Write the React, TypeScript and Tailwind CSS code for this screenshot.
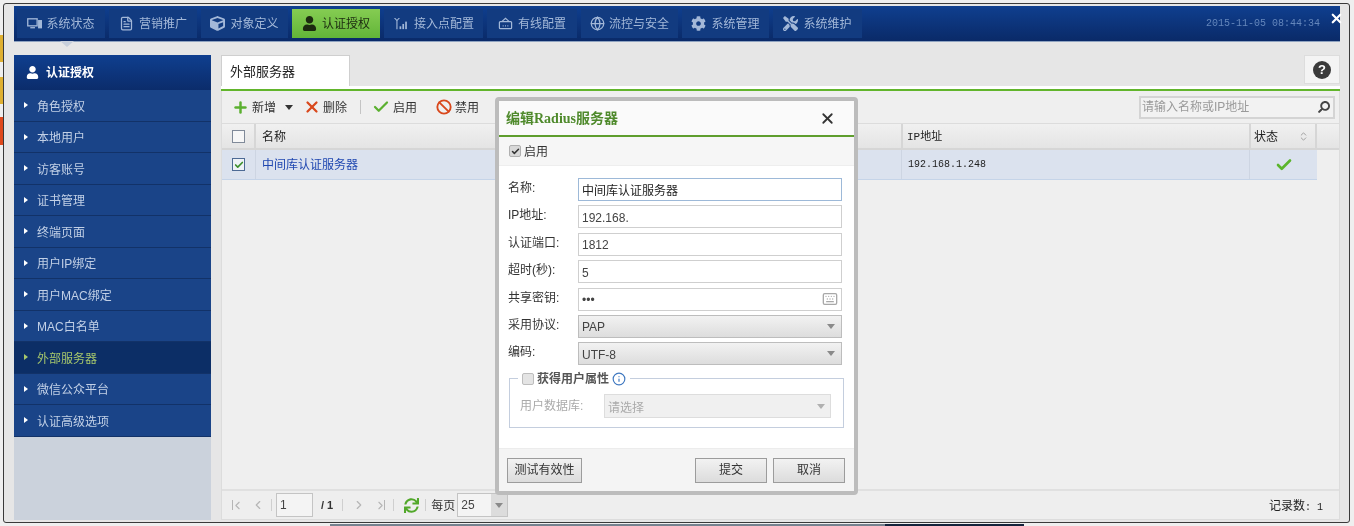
import React from "react";
import { FileText, Globe, X, Check, Ban, ChevronLeft, ChevronRight, ChevronsUpDown, Info, Keyboard, Plus } from "lucide-react";
import { FaCube, FaUser, FaCog, FaTools, FaSync, FaSearch } from "react-icons/fa";

type IconT = React.ComponentType<{ size?: number; className?: string }>;

const MonitorTower: IconT = ({ size = 16 }) => (
  <svg width={size} height={size} viewBox="0 0 16 16" fill="none" stroke="currentColor" strokeWidth="1.4">
    <rect x="0.8" y="3" width="10" height="7.5" />
    <path d="M3.5 12.5h5" />
    <rect x="12.5" y="5" width="2.8" height="7.5" fill="currentColor" />
  </svg>
);
const Antenna: IconT = ({ size = 16 }) => (
  <svg width={size} height={size} viewBox="0 0 16 16" fill="currentColor">
    <path d="M1 2l2.6 3V14h1.2V5L7.4 2H6L4.2 4 2.4 2z" />
    <rect x="7" y="11" width="1.8" height="3" />
    <rect x="10" y="8.5" width="1.8" height="5.5" />
    <rect x="13" y="6" width="1.8" height="8" />
  </svg>
);
const WiredBox: IconT = ({ size = 16 }) => (
  <svg width={size} height={size} viewBox="0 0 16 16" fill="none" stroke="currentColor" strokeWidth="1.3">
    <rect x="1.5" y="6" width="13" height="7.5" rx="1" />
    <path d="M4 6l4-3.5L12 6" />
    <path d="M5 10.5h1M7.5 10.5h1M10 10.5h1" />
  </svg>
);

const nav: { t: string; w: string; I: IconT; on?: boolean; gap: string }[] = [
  { t: "系统状态", w: "w-[88px]", I: MonitorTower, gap: "gap-[4px]" },
  { t: "营销推广", w: "w-[88px]", I: FileText as unknown as IconT, gap: "gap-[5px]" },
  { t: "对象定义", w: "w-[87px]", I: FaCube, gap: "gap-[5px]" },
  { t: "认证授权", w: "w-[88px]", I: FaUser, on: true, gap: "gap-[5px]" },
  { t: "接入点配置", w: "w-[99px]", I: Antenna, gap: "gap-[6px]" },
  { t: "有线配置", w: "w-[90px]", I: WiredBox, gap: "gap-[5px]" },
  { t: "流控与安全", w: "w-[97px]", I: Globe as unknown as IconT, gap: "gap-[4px]" },
  { t: "系统管理", w: "w-[87px]", I: FaCog, gap: "gap-[5px]" },
  { t: "系统维护", w: "w-[89px]", I: FaTools, gap: "gap-[5px]" },
];

const side = ["角色授权", "本地用户", "访客账号", "证书管理", "终端页面", "用户IP绑定", "用户MAC绑定", "MAC白名单", "外部服务器", "微信公众平台", "认证高级选项"];

function Caret({ c = "#8a8a8a" }: { c?: string }) {
  return <span className="block w-0 h-0 border-x-[4px] border-x-transparent border-t-[5px]" style={{ borderTopColor: c }} />;
}

function Field({ label, children }: { label: string; children: React.ReactNode }) {
  return (
    <div className="flex items-center h-[23px] pl-[9px] pr-[12px]">
      <span className="w-[70px] text-[12px] leading-none -mt-[3px] text-[#333]">{label}</span>
      {children}
    </div>
  );
}

function Inp({ v, active, children }: { v: string; active?: boolean; children?: React.ReactNode }) {
  return (
    <div className={"flex-1 h-[23px] flex items-center justify-between px-[3px] border bg-white text-[12px] " + (active ? "border-[#9db9d8] text-[#222]" : "border-[#cfcfcf] text-[#444]")}>
      <span className="pt-[2px]">{v}</span>
      {children}
    </div>
  );
}

function Sel({ v }: { v: string }) {
  return (
    <div className="flex-1 h-[23px] flex items-center justify-between pl-[3px] pr-[6px] border border-[#bdbdbd] bg-gradient-to-b from-[#f2f2f2] to-[#dddddd] text-[12px] text-[#444]">
      <span className="pt-[2px]">{v}</span>
      <Caret />
    </div>
  );
}

function Btn({ w, children }: { w: string; children: React.ReactNode }) {
  return <button className={w + " h-[25px] border border-[#9c9c9c] bg-gradient-to-b from-[#f2f2f2] to-[#dcdcdc] text-[#333] text-[12px]"}>{children}</button>;
}

export default function App() {
  return (
    <div className="relative w-[1354px] h-[526px] overflow-hidden bg-[#efefef] text-[12px] blur-[0.35px]" style={{ fontFamily: '"Liberation Sans","Noto Sans CJK SC",sans-serif' }}>
      {/* fragments of the page behind */}
      <span className="absolute left-0 top-[35px] w-[3px] h-[27px] bg-[#e0b030]" />
      <span className="absolute left-0 top-[77px] w-[3px] h-[27px] bg-[#e0b030]" />
      <span className="absolute left-0 top-[117px] w-[3px] h-[28px] bg-[#e0491c]" />
      <span className="absolute left-[330px] top-[524px] w-[555px] h-[2px] bg-[#76828f]" />
      <span className="absolute left-[885px] top-[524px] w-[139px] h-[2px] bg-[#14243c]" />

      <div className="ml-[3px] mt-[3px] w-[1347px] h-[520px] border border-[#3a3a3a] rounded-[3px] bg-[#e6e6e6] pl-[10px] pr-[9px] pt-[2px] pb-[2px] flex flex-col">
        {/* header */}
        <header className="h-[35px] shrink-0 flex items-center justify-between pl-[3px] pr-[20px] bg-gradient-to-b from-[#0f3f8f] to-[#0a2a68] shadow-[0_1px_0_#8fa3c0]">
          <nav className="flex gap-[4px] h-[29px]">
            {nav.map(({ t, w, I, on, gap }) => (
              <div key={t} className={w + " flex items-center justify-center text-[12px] " + gap + " " + (on ? "bg-gradient-to-b from-[#85cc52] to-[#62b538] text-[#1c2a10]" : "bg-[#123b80] text-[#a3b8d8]")}>
                <I size={15} />
                <span>{t}</span>
              </div>
            ))}
          </nav>
          <span className="text-[10px] text-[#6486bb]" style={{ fontFamily: '"Liberation Mono",monospace' }}>2015-11-05 08:44:34</span>
        </header>
        <div className="h-[14px] shrink-0 flex pl-[46px]">
          <span className="w-0 h-0 border-x-[7px] border-x-transparent border-t-[6px] border-t-[#c7cfdb]" />
        </div>
        {/* body */}
        <div className="flex-1 flex gap-[10px] min-h-0">
          {/* sidebar */}
          <aside className="w-[197px] shrink-0 bg-[#cbd2dc] flex flex-col">
            <div className="h-[35px] flex items-center gap-[7px] pl-[12px] bg-gradient-to-b from-[#0f3f8f] to-[#0b2c6b] text-white font-bold">
              <FaUser size={13} />
              <span className="pt-[1px]">认证授权</span>
            </div>
            {side.map((s) => {
              const on = s === "外部服务器";
              return (
                <div key={s} className={"h-[31.5px] flex items-center gap-[9px] pl-[10px] border-b border-[#123268] text-[12px] " + (on ? "bg-[#0c2e66] text-[#a6c76c]" : "bg-[#1a4488] text-[#c2d0e6]")}>
                  <span className={"w-0 h-0 border-y-[3px] border-y-transparent border-l-[4px] " + (on ? "border-l-[#a6c76c]" : "border-l-white")} />
                  <span className="pt-[3px]">{s}</span>
                </div>
              );
            })}
          </aside>
          {/* main */}
          <main className="flex-1 min-w-0 flex flex-col">
            <div className="h-[31px] shrink-0 flex items-start justify-between">
              <div className="w-[129px] h-[31px] bg-white border border-b-0 border-[#cfcfcf] flex items-center pl-[8px] pt-[1px] text-[13px] text-[#222]">外部服务器</div>
              <div className="w-[36px] h-[29px] bg-[#f4f4f4] border border-[#dddddd] flex items-center justify-center">
                <span className="w-[18px] h-[18px] rounded-full bg-[#3a3a3a] text-white text-[13px] font-bold flex items-center justify-center">?</span>
              </div>
            </div>
            <div className="h-[3px] shrink-0 bg-white" />
            <div className="h-[2px] shrink-0 bg-[#62b52c]" />
            <div className="flex-1 flex flex-col bg-[#efefef] border-x border-b border-[#dcdcdc] min-h-0">
              {/* toolbar */}
              <div className="h-[33px] shrink-0 flex items-center justify-between pl-[10px] pr-[4px] border-b border-[#dcdcdc] text-[#333]">
                <div className="flex items-center">
                  <Plus size={17} strokeWidth={3.5} className="text-[#5bb030]" />
                  <span className="ml-[3px] pt-[2px]">新增</span>
                  <span className="ml-[9px]"><Caret c="#333" /></span>
                  <X size={18} strokeWidth={3} className="ml-[10px] text-[#d9481c]" />
                  <span className="ml-[2px] pt-[2px]">删除</span>
                  <span className="ml-[13px] w-px h-[14px] bg-[#c4c4c4]" />
                  <Check size={18} strokeWidth={3} className="ml-[11px] text-[#5bb030]" />
                  <span className="ml-[3px] pt-[2px]">启用</span>
                  <Ban size={16} strokeWidth={2.8} className="ml-[19px] text-[#d9481c]" />
                  <span className="ml-[3px] pt-[2px]">禁用</span>
                </div>
                <div className="w-[196px] h-[23px] border-2 border-[#d4d4d4] bg-[#f2f2f2] flex items-center justify-between pl-[1px] pr-[3px] text-[#9a9a9a]">
                  <span>请输入名称或IP地址</span>
                  <FaSearch size={12} className="text-[#444] -scale-x-100" />
                </div>
              </div>
              {/* table head */}
              <div className="h-[26px] shrink-0 flex bg-gradient-to-b from-[#f0f0f0] to-[#e4e4e4] border-b-2 border-[#d6d6d6] text-[#222]">
                <div className="w-[34px] flex items-center justify-center border-r-2 border-[#d6d6d6]">
                  <span className="w-[13px] h-[13px] border border-[#808a99] bg-[#f7f7f7]" />
                </div>
                <div className="w-[645px] flex items-center pl-[6px] pt-[2px]">名称</div>
                <div className="w-[348px] flex items-center pl-[4px] pt-[2px] border-l-2 border-[#d6d6d6] text-[11px]" style={{ fontFamily: '"Liberation Mono","Noto Sans CJK SC",monospace' }}>IP地址</div>
                <div className="w-[68px] flex items-center justify-between pl-[3px] pr-[6px] border-x-2 border-[#d6d6d6]">
                  <span className="pt-[2px]">状态</span>
                  <ChevronsUpDown size={11} className="text-[#999]" />
                </div>
              </div>
              {/* row */}
              <div className="h-[30px] shrink-0 flex w-[1095px] bg-[#dbe2ee] border-b border-[#c5d4e8]">
                <div className="w-[34px] flex items-center justify-center border-r border-[#cdd5e2]">
                  <span className="w-[13px] h-[13px] border border-[#4d6a94] bg-[#eef2f6] flex items-center justify-center">
                    <Check size={10} strokeWidth={4} className="text-[#3c8f2c]" />
                  </span>
                </div>
                <div className="w-[645px] flex items-center pl-[6px] text-[#1f47b0]">中间库认证服务器</div>
                <div className="w-[348px] flex items-center pl-[6px] border-l border-[#cdd5e2] text-[10px] text-[#222]" style={{ fontFamily: '"Liberation Mono",monospace' }}>192.168.1.248</div>
                <div className="w-[68px] flex items-center justify-center border-l border-[#cdd5e2]">
                  <Check size={18} strokeWidth={3.5} className="text-[#5bb52c]" />
                </div>
              </div>
              <div className="flex-1 bg-[#efefef]" />
              {/* pager */}
              <div className="h-[30px] shrink-0 flex items-center justify-between pl-[8px] pr-[16px] border-t-2 border-[#e0e0e0] bg-[#eeeeee] text-[#333]">
                <div className="flex items-center text-[#b5b5b5]">
                  <span className="flex items-center w-[14px]"><span className="w-px h-[10px] bg-[#b5b5b5] mr-[-2px] ml-[2px]" /><ChevronLeft size={13} /></span>
                  <ChevronLeft size={14} className="ml-[7px]" />
                  <span className="ml-[6px] w-px h-[12px] bg-[#cfcfcf]" />
                  <span className="ml-[4px] w-[37px] h-[24px] border border-[#c4c4c4] bg-[#f4f4f4] text-[#444] pl-[3px] flex items-center">1</span>
                  <span className="ml-[8px] text-[#333] font-bold text-[11px]">/ 1</span>
                  <span className="ml-[9px] w-px h-[12px] bg-[#cfcfcf]" />
                  <ChevronRight size={14} className="ml-[9px]" />
                  <span className="ml-[8px] flex items-center w-[14px]"><ChevronRight size={13} /><span className="w-px h-[10px] bg-[#b5b5b5] ml-[-3px]" /></span>
                  <span className="ml-[5px] w-px h-[12px] bg-[#cfcfcf]" />
                  <FaSync size={15} className="ml-[10px] text-[#52a82a]" />
                  <span className="ml-[6px] w-px h-[12px] bg-[#cfcfcf]" />
                  <span className="ml-[5px] text-[#333] pt-[1px]">每页</span>
                  <span className="ml-[2px] w-[51px] h-[24px] border border-[#c4c4c4] bg-[#f4f4f4] text-[#444] pl-[3px] flex items-center justify-between">
                    25
                    <span className="w-[16px] h-full bg-[#dcdcdc] flex items-center justify-center"><Caret /></span>
                  </span>
                </div>
                <span className="text-[#222] pt-[1px]">记录数<span className="text-[10px]" style={{ fontFamily: '"Liberation Mono",monospace' }}>: 1</span></span>
              </div>
            </div>
          </main>
        </div>
      </div>

      {/* overlay close */}
      <X size={15} strokeWidth={3.5} className="absolute left-[1329px] top-[11px] text-white" />

      {/* modal */}
      <div className="absolute left-[495px] top-[97px] w-[363px] h-[398px] bg-white border-[4px] border-[#bcbcbc] rounded-[4px] flex flex-col text-[#333]">
        <div className="h-[36px] shrink-0 flex items-center justify-between pl-[7px] pr-[18px] border-b-[2px] border-[#5f9e2e] bg-[#fafafa]">
          <span className="text-[14px] font-bold text-[#4f8a2c] pt-[1px]" style={{ fontFamily: '"Liberation Serif","Noto Sans CJK SC",serif' }}>编辑Radius服务器</span>
          <X size={17} strokeWidth={2.5} className="text-[#333]" />
        </div>
        <div className="h-[29px] shrink-0 flex items-center gap-[3px] pl-[10px] bg-[#f6f6f6] border-b border-[#eeeeee]">
          <span className="w-[12px] h-[12px] rounded-[2px] bg-[#d8d8d8] border border-[#b0b0b0] flex items-center justify-center">
            <Check size={9} strokeWidth={4} className="text-[#333]" />
          </span>
          <span className="pt-[1px]">启用</span>
        </div>
        <div className="flex-1 flex flex-col gap-[4.4px] pt-[12px]">
          <Field label="名称:"><Inp v="中间库认证服务器" active /></Field>
          <Field label="IP地址:"><Inp v="192.168." /></Field>
          <Field label="认证端口:"><Inp v="1812" /></Field>
          <Field label="超时(秒):"><Inp v="5" /></Field>
          <Field label="共享密钥:"><Inp v="•••"><Keyboard size={16} className="text-[#a8a8a8]" /></Inp></Field>
          <Field label="采用协议:"><Sel v="PAP" /></Field>
          <Field label="编码:"><Sel v="UTF-8" /></Field>
          <div className="relative ml-[10px] mt-[8.6px] h-[50px] w-[335px] border border-[#c4cede] pl-[10px] pr-[12px] pt-[6px] flex items-center text-[#aaaaaa]">
            <div className="absolute left-[8px] -top-[9px] bg-white px-[4px] flex items-center gap-[3px] font-bold text-[#555]">
              <span className="w-[12px] h-[12px] rounded-[2px] bg-[#e4e4e4] border border-[#bdbdbd]" />
              <span>获得用户属性</span>
              <Info size={14} strokeWidth={2} className="text-[#3f78c0]" />
            </div>
            <span className="w-[84px]">用户数据库:</span>
            <div className="flex-1 h-[24px] bg-[#f0f0f0] border border-[#dddddd] flex items-center justify-between pl-[3px] pr-[5px]">
              <span className="pt-[4px]">请选择</span>
              <Caret c="#b0b0b0" />
            </div>
          </div>
        </div>
        <div className="h-[43px] shrink-0 bg-[#f4f4f4] border-t border-[#ececec] flex items-center justify-between pl-[8px] pr-[9px] text-[#333]">
          <Btn w="w-[75px]">测试有效性</Btn>
          <div className="flex gap-[6px]">
            <Btn w="w-[72px]">提交</Btn>
            <Btn w="w-[72px]">取消</Btn>
          </div>
        </div>
      </div>
    </div>
  );
}
